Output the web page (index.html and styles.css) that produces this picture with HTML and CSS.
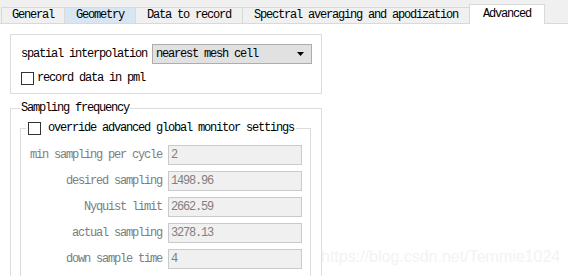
FILE: index.html
```html
<!DOCTYPE html>
<html lang="en">
<head>
    <meta charset="UTF-8">
    <title>Advanced</title>
    <link rel="stylesheet" href="styles.css">
</head>
<body>
    <div class="tabs">
        <div class="tab tab-first">General</div>
        <div class="tab tab-hover">Geometry</div>
        <div class="tab">Data to record</div>
        <div class="tab">Spectral averaging and apodization</div>
        <div class="tab tab-active">Advanced</div>
    </div>

    <div class="page">
        <div class="top-box">
            <div class="row">
                <span>spatial interpolation</span>
                <div class="combo">
                    <span>nearest mesh cell</span>
                    <svg width="7" height="4" viewBox="0 0 7 4"><polygon points="0,0 7,0 3.5,4" fill="#000"/></svg>
                </div>
            </div>
            <div class="check-row"><span class="check"></span>record data in pml</div>
        </div>

        <fieldset class="group sampling">
            <legend>Sampling frequency</legend>
            <fieldset class="group override">
                <legend><span class="check"></span>override advanced global monitor settings</legend>
                <div class="fields">
                    <span class="field-label">min sampling per cycle</span><span class="field">2</span>
                    <span class="field-label">desired sampling</span><span class="field">1498.96</span>
                    <span class="field-label">Nyquist limit</span><span class="field">2662.59</span>
                    <span class="field-label">actual sampling</span><span class="field">3278.13</span>
                    <span class="field-label">down sample time</span><span class="field">4</span>
                </div>
            </fieldset>
        </fieldset>
    </div>

    <div class="watermark">https://blog.csdn.net/Temmie1024</div>
</body>
</html>
```

FILE: styles.css
```css
body {
    margin: 0;
    background: #fff;
    color: #000;
    font-family: "Liberation Mono", monospace;
    font-size: 12px;
    letter-spacing: -1.2px;
    overflow: hidden;
}
.tabs {
    display: flex;
    align-items: flex-end;
    height: 23px;
    padding-left: 1px;
    background: #f0f0f0;
    border-bottom: 1px solid #d9d9d9;
}
.tab {
    height: 16px;
    line-height: 15px;
    padding: 0 11px;
    margin-right: -1px;
    border: 1px solid #d9d9d9;
    border-bottom: none;
    box-sizing: border-box;
    background: #f0f0f0;
    white-space: nowrap;
}
.tab-first {
    padding: 0 10px;
}
.tab-hover {
    background: #d8e6f4;
}
.tab-active {
    height: 20px;
    line-height: 18px;
    padding: 0 13px;
    margin-bottom: -1px;
    background: #fff;
}
.page {
    padding: 10px 0 0 10px;
}
.top-box {
    width: 312px;
    box-sizing: border-box;
    border: 1px solid #dcdcdc;
    padding: 9px 9px 5px 10px;
}
.row {
    display: flex;
    align-items: center;
    height: 20px;
}
.combo {
    margin-left: auto;
    width: 160px;
    height: 20px;
    box-sizing: border-box;
    border: 1px solid #adadad;
    background: #e1e1e1;
    display: flex;
    align-items: center;
    justify-content: space-between;
    padding: 0 7px 0 3px;
}
.check-row {
    display: flex;
    align-items: center;
    gap: 3px;
    height: 20px;
    margin-top: 4px;
}
.check {
    width: 13px;
    height: 13px;
    box-sizing: border-box;
    border: 1px solid #333;
    background: #fff;
    flex: none;
}
.group {
    margin: 0;
    min-width: 0;
    border: 1px solid #dcdcdc;
}
.group legend {
    line-height: 14px;
    height: 14px;
}
.sampling {
    margin-top: 7px;
    width: 312px;
    box-sizing: border-box;
    padding: 6px 10px 40px 9px;
}
.sampling > legend {
    padding: 0 1px;
}
.override {
    padding: 10px 7px 40px 5px;
}
.override > legend {
    display: flex;
    align-items: center;
    gap: 7px;
    padding: 0 2px;
}
.fields {
    display: grid;
    grid-template-columns: 136px 134px;
    column-gap: 6px;
    row-gap: 6px;
}
.field-label {
    text-align: right;
    line-height: 20px;
    color: #7d7d7d;
    white-space: nowrap;
}
.field {
    height: 20px;
    box-sizing: border-box;
    border: 1px solid #cacaca;
    background: #f0f0f0;
    color: #808080;
    padding-left: 2px;
    line-height: 18px;
}
.watermark {
    position: absolute;
    left: 321px;
    top: 248px;
    font-family: "Liberation Sans", Arial, sans-serif;
    font-size: 16px;
    letter-spacing: 0;
    color: #f3f3f3;
    white-space: nowrap;
}
```
